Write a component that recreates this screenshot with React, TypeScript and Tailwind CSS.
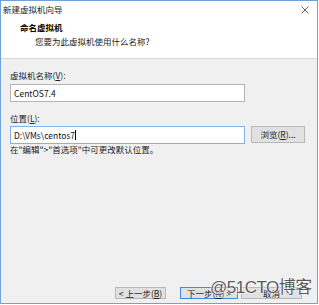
import * as React from "react";

const font = "font-['Segoe_UI','Noto_Sans_CJK_SC',sans-serif]";

function Key({ children }: { children: string }) {
  return <span className="underline underline-offset-1">{children}</span>;
}

function Button({
  children,
  primary,
  className,
}: {
  children: React.ReactNode;
  primary?: boolean;
  className?: string;
}) {
  return (
    <div
      className={`h-[12px] bg-[#e1e1e1] border flex items-center justify-center text-[8.5px] leading-none text-[#222] whitespace-nowrap ${
        primary ? "border-[#3d8ee0]" : "border-[#b9b9b9]"
      } ${className ?? ""}`}
    >
      {children}
    </div>
  );
}

function Field({ value, focused }: { value: string; focused?: boolean }) {
  return (
    <div
      className={`w-[235px] h-[18px] bg-white border flex items-center px-[3px] text-[8.5px] text-[#111] ${
        focused ? "border-[#7eb4ea]" : "border-[#b4b4b4]"
      }`}
    >
      <span>{value}</span>
      {focused && <span className="w-px h-[10px] bg-black" />}
    </div>
  );
}

export default function App() {
  return (
    <div
      className={`relative w-[318px] h-[304px] border border-[#6fa3d6] flex flex-col bg-[#f0f0f0] overflow-hidden ${font}`}
    >
      <div className="bg-white h-[58px] flex flex-col border-b border-[#d6d6d6]">
        <div className="h-[17px] flex items-center justify-between pl-[2px] pr-[8px] text-[8.5px] text-[#222]">
          <span>新建虚拟机向导</span>
          <svg width="8" height="8" viewBox="0 0 8 8">
            <path d="M0.5 0.5L7.5 7.5M7.5 0.5L0.5 7.5" stroke="#555" strokeWidth="0.9" />
          </svg>
        </div>
        <div className="pl-[19px] pt-[2px] text-[8.5px] leading-[14px] font-bold text-black">
          命名虚拟机
        </div>
        <div className="pl-[34px] pt-[1px] text-[8.5px] leading-[12px] text-[#222]">
          您要为此虚拟机使用什么名称?
        </div>
      </div>

      <div className="flex-1 flex flex-col px-[9px] pt-[10px] text-[8.5px] text-[#222]">
        <div className="leading-[12px] mb-[3px]">
          虚拟机名称(<Key>V</Key>):
        </div>
        <Field value="CentOS7.4" />
        <div className="leading-[12px] mt-[10px] mb-[2px]">
          位置(<Key>L</Key>):
        </div>
        <div className="flex items-start gap-[6px]">
          <Field value="D:\VMs\centos7" focused />
          <Button className="w-[54px] h-[17px]">
            浏览(<Key>R</Key>)...
          </Button>
        </div>
        <div className="leading-[10px] mt-0">
          在"编辑"&gt;"首选项"中可更改默认位置。
        </div>
        <div className="flex-1" />
        <div className="flex items-center justify-end gap-[3px] pr-[6px] mb-[4px]">
          <Button className="w-[51px] mr-[11px]">
            &lt; 上一步(<Key>B</Key>)
          </Button>
          <Button primary className="w-[58px]">
            下一步(<Key>N</Key>) &gt;
          </Button>
          <Button className="w-[61px]">取消</Button>
        </div>
      </div>

      <div className="absolute left-[209px] top-[278px] whitespace-nowrap text-[17px] leading-none text-[#5a5a5a] tracking-[-0.5px] [text-shadow:0_0_2px_#fff,0_0_2px_#fff,0_0_1px_#fff] font-['Liberation_Sans','Noto_Sans_CJK_SC',sans-serif]">
        @51CTO博客
      </div>
    </div>
  );
}
